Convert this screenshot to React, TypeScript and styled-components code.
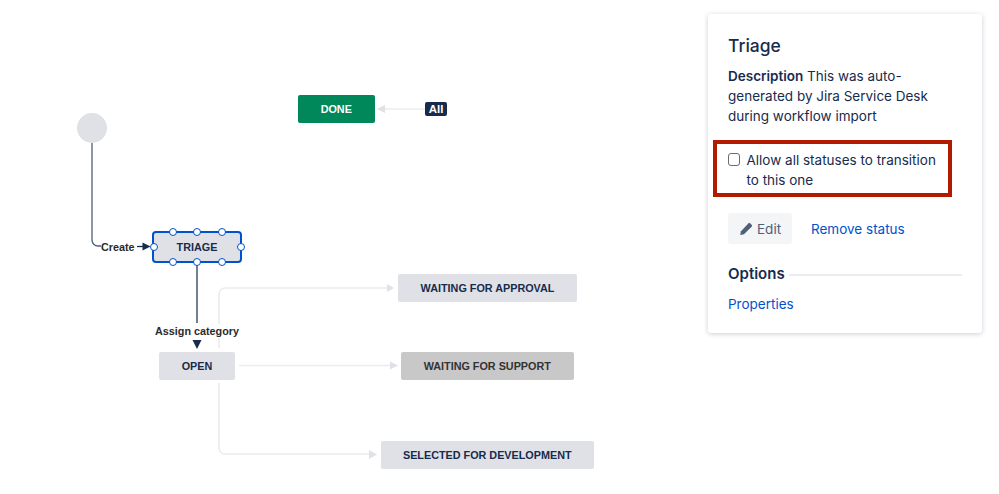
import React from "react";
import styled, { createGlobalStyle } from "styled-components";

const Global = createGlobalStyle`
  html, body { margin: 0; padding: 0; background: #fff; }
  body { font-family: Inter, "Liberation Sans", sans-serif; overflow: hidden; }
`;

const Page = styled.div`
  width: 999px;
  height: 494px;
  display: flex;
  align-items: flex-start;
  overflow: hidden;
`;

const Canvas = styled.div`
  position: relative;
  flex: 1;
  height: 494px;
`;

const Edges = styled.svg`
  position: absolute;
  left: 0;
  top: 0;
`;

const Start = styled.div`
  position: absolute;
  left: 77px;
  top: 113px;
  width: 30px;
  height: 30px;
  border-radius: 50%;
  background: #dfe1e6;
`;

const Node = styled.div<{ $x: number; $y: number; $w: number; $h?: number; $tone?: "green" | "grey" }>`
  position: absolute;
  left: ${(p) => p.$x}px;
  top: ${(p) => p.$y}px;
  width: ${(p) => p.$w}px;
  height: ${(p) => p.$h ?? 27.5}px;
  box-sizing: border-box;
  display: flex;
  align-items: center;
  justify-content: center;
  border-radius: 2px;
  font: bold 10.8px "Liberation Sans", Arial, sans-serif;
  background: ${(p) => (p.$tone === "green" ? "#00875a" : p.$tone === "grey" ? "#c8c8c8" : "#dfe1e6")};
  color: ${(p) => (p.$tone === "green" ? "#fff" : p.$tone === "grey" ? "#333" : "#172b4d")};
`;

const SelectedNode = styled(Node)`
  border: 2px solid #0052cc;
  border-radius: 4px;
`;

const Handle = styled.span<{ $x: number; $y: number }>`
  position: absolute;
  left: ${(p) => p.$x - 4}px;
  top: ${(p) => p.$y - 4}px;
  width: 8px;
  height: 8px;
  box-sizing: border-box;
  border: 1.25px solid #0052cc;
  border-radius: 50%;
  background: #fff;
`;

const EdgeLabel = styled.span<{ $x: number; $y: number }>`
  position: absolute;
  left: ${(p) => p.$x}px;
  top: ${(p) => p.$y}px;
  font: bold 10.8px/14px "Liberation Sans", Arial, sans-serif;
  color: #2b2b2b;
  background: #fff;
  white-space: nowrap;
`;

const AllBadge = styled.span`
  position: absolute;
  left: 425px;
  top: 102px;
  width: 22px;
  height: 14px;
  border-radius: 2px;
  background: #172b4d;
  color: #fff;
  font: bold 11.5px/14px "Liberation Sans", Arial, sans-serif;
  text-align: center;
`;

const Panel = styled.aside`
  position: relative;
  box-sizing: border-box;
  width: 274px;
  height: 319px;
  margin: 14px 17px 0 0;
  padding: 20px;
  border-radius: 3px;
  background: #fff;
  box-shadow: 0 1px 5px rgba(9, 30, 66, 0.22);
  color: #172b4d;
  font-size: 13.5px;
  line-height: 20px;
`;

const Title = styled.h2`
  margin: 0;
  font-size: 17.5px;
  line-height: 24px;
  font-weight: 500;
`;

const Description = styled.p`
  margin: 8px 0 0;
  b { font-weight: 600; }
`;

const Highlight = styled.label`
  display: flex;
  box-sizing: border-box;
  width: 239px;
  height: 57px;
  margin: 14px 0 0 -15.5px;
  padding: 6px 8px 0 11px;
  border: 4.5px solid #b31b00;
`;

const Box = styled.span`
  flex: none;
  width: 12.5px;
  height: 13px;
  box-sizing: border-box;
  margin: 3px 6.5px 0 0;
  border: 1px solid #6b6b6b;
  border-radius: 3px;
  background: #fff;
`;

const Actions = styled.div`
  display: flex;
  align-items: center;
  margin-top: 16px;
  gap: 19px;
`;

const EditButton = styled.button`
  display: flex;
  align-items: center;
  gap: 4px;
  height: 31px;
  width: 64px;
  box-sizing: border-box;
  padding: 0 0 0 11px;
  border: 0;
  border-radius: 3px;
  background: #f4f5f7;
  color: #505f79;
  font: inherit;
`;

const Link = styled.a`
  color: #0052cc;
`;

const OptionsRow = styled.div`
  display: flex;
  align-items: center;
  gap: 4px;
  margin-top: 18px;
  font-size: 15px;
  font-weight: 600;
  line-height: 24px;
  &::after {
    content: "";
    flex: 1;
    height: 2px;
    margin-top: 2px;
    background: #ebecf0;
  }
`;

const Properties = styled(Link)`
  display: block;
  margin-top: 8px;
`;

const Head = ({ d, fill }: { d: string; fill: string }) => <path d={d} fill={fill} />;

const light = "#ebecf0";
const lightHead = "#dfe1e6";
const dark = "#505f79";
const darkHead = "#172b4d";

export default function App() {
  const handles: [number, number][] = [
    [172.5, 232], [197, 232], [221.5, 232],
    [172.5, 261.5], [197, 261.5], [221.5, 261.5],
    [153.5, 246.5], [241, 246.5],
  ];
  return (
    <Page>
      <Global />
      <Canvas>
        <Edges width="708" height="494" fill="none">
          <path d="M92 143V240a6 6 0 0 0 6 6H101" stroke={dark} strokeWidth="1.3" />
          <path d="M137 246.5H145" stroke={darkHead} strokeWidth="1.3" />
          <Head d="M142.5 242.5L150.5 246.5L142.5 250.5Z" fill={darkHead} />
          <path d="M197 262V323" stroke={dark} strokeWidth="1.6" />
          <Head d="M192.5 340H201.5L197 349Z" fill={darkHead} />
          <path d="M384 109H425" stroke={light} strokeWidth="1.6" />
          <Head d="M385 105V113L377 109Z" fill={lightHead} />
          <path d="M219 348V294a6 6 0 0 1 6-6H388" stroke={light} strokeWidth="1.6" />
          <Head d="M387 284L394 288L387 292Z" fill={lightHead} />
          <path d="M239 365.5H391" stroke={light} strokeWidth="1.6" />
          <Head d="M390 361.5L398 365.5L390 369.5Z" fill={lightHead} />
          <path d="M219 383V448a6 6 0 0 0 6 6H370" stroke={light} strokeWidth="1.6" />
          <Head d="M369 450L377 454.5L369 459Z" fill={lightHead} />
        </Edges>

        <Start />
        <EdgeLabel $x={101} $y={240}>Create</EdgeLabel>
        <EdgeLabel $x={155} $y={324}>Assign category</EdgeLabel>
        <AllBadge>All</AllBadge>

        <Node $x={298} $y={95} $w={76.5} $tone="green">DONE</Node>
        <SelectedNode $x={152} $y={231} $w={90} $h={32}>TRIAGE</SelectedNode>
        {handles.map(([x, y]) => (
          <Handle key={`${x}-${y}`} $x={x} $y={y} />
        ))}
        <Node $x={159} $y={352} $w={76}>OPEN</Node>
        <Node $x={398} $y={274} $w={179}>WAITING FOR APPROVAL</Node>
        <Node $x={401} $y={352} $w={172.5} $tone="grey">WAITING FOR SUPPORT</Node>
        <Node $x={380.5} $y={441} $w={213.5}>SELECTED FOR DEVELOPMENT</Node>
      </Canvas>

      <Panel>
        <Title>Triage</Title>
        <Description>
          <b>Description</b> This was auto-generated by Jira Service Desk during workflow import
        </Description>
        <Highlight>
          <Box />
          <span>Allow all statuses to transition to this one</span>
        </Highlight>
        <Actions>
          <EditButton>
            <svg width="14" height="14" viewBox="0 0 14 14" fill="#505f79">
              <path d="M9.6 1.2a1 1 0 0 1 1.4 0l1.8 1.8a1 1 0 0 1 0 1.4L5 12.2 1.2 13l.8-3.8z" />
            </svg>
            Edit
          </EditButton>
          <Link>Remove status</Link>
        </Actions>
        <OptionsRow>Options</OptionsRow>
        <Properties>Properties</Properties>
      </Panel>
    </Page>
  );
}
